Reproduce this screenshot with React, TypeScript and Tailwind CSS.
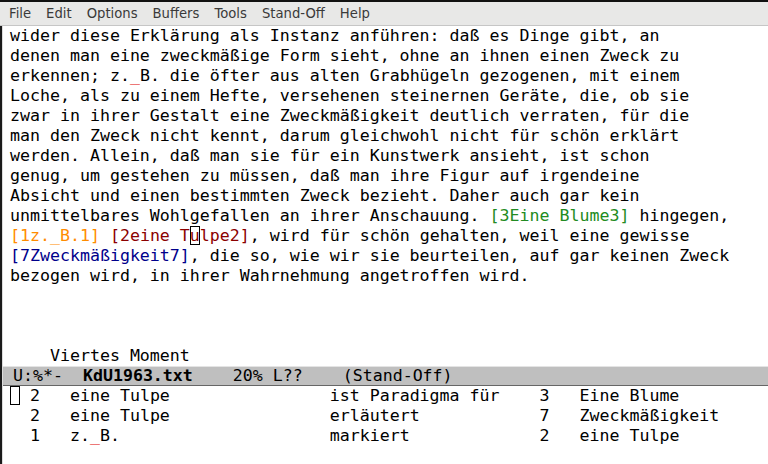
import React from "react";

const mono = "font-['DejaVu_Sans_Mono','Liberation_Mono',monospace] text-[16.6px] leading-[20px]";

const menus = ["File", "Edit", "Options", "Buffers", "Tools", "Stand-Off", "Help"];

function Line({ children }: { children?: React.ReactNode }) {
  return <div className="h-[20px] whitespace-pre">{children ?? " "}</div>;
}

function Cursor({ children }: { children: React.ReactNode }) {
  return <span className="shadow-[inset_0_0_0_1px_#000]">{children}</span>;
}

const Us = () => <span className="text-[#e00000]">_</span>;

const rows = [
  { n: "2", a: "eine Tulpe", v: "ist Paradigma für", m: "3", b: "Eine Blume" },
  { n: "2", a: "eine Tulpe", v: "erläutert", m: "7", b: "Zweckmäßigkeit" },
  { n: "1", a: "z._B.", v: "markiert", m: "2", b: "eine Tulpe" },
];

function Row({ r, first }: { r: (typeof rows)[number]; first: boolean }) {
  const head = r.a.padEnd(26, " ");
  const verb = r.v.padEnd(21, " ");
  const renderA = r.a === "z._B." ? (
    <>
      z.<Us />B.{" ".repeat(21)}
    </>
  ) : (
    head
  );
  return (
    <Line>
      {first ? <Cursor> </Cursor> : " "}
      {" " + r.n + "   "}
      {renderA}
      {verb}
      {r.m + "   " + r.b}
    </Line>
  );
}

export default function App() {
  return (
    <div className="w-[768px] h-[464px] bg-white overflow-hidden flex flex-col text-black">
      <div className="h-[2px] bg-[#111]" />
      <div className="h-[24px] bg-[#e8e8e7] border-b border-[#c6c6c6] flex items-center pl-[9px] gap-[15px] font-['DejaVu_Sans',sans-serif] text-[13.2px] text-[#3a3a3a]">
        {menus.map((m) => (
          <span key={m}>{m}</span>
        ))}
      </div>
      <div className="flex-1 flex border-l-2 border-[#1a1a1a]">
        <div className="w-[1px] bg-[#dcdcdc]" />
        <div className={`flex-1 flex flex-col ${mono}`}>
          <div className="pl-[7px]">
            <Line>wider diese Erklärung als Instanz anführen: daß es Dinge gibt, an</Line>
            <Line>denen man eine zweckmäßige Form sieht, ohne an ihnen einen Zweck zu</Line>
            <Line>
              erkennen; z.<Us />B. die öfter aus alten Grabhügeln gezogenen, mit einem
            </Line>
            <Line>Loche, als zu einem Hefte, versehenen steinernen Geräte, die, ob sie</Line>
            <Line>zwar in ihrer Gestalt eine Zweckmäßigkeit deutlich verraten, für die</Line>
            <Line>man den Zweck nicht kennt, darum gleichwohl nicht für schön erklärt</Line>
            <Line>werden. Allein, daß man sie für ein Kunstwerk ansieht, ist schon</Line>
            <Line>genug, um gestehen zu müssen, daß man ihre Figur auf irgendeine</Line>
            <Line>Absicht und einen bestimmten Zweck bezieht. Daher auch gar kein</Line>
            <Line>
              unmittelbares Wohlgefallen an ihrer Anschauung.{" "}
              <span className="text-[#228b22]">[3Eine Blume3]</span> hingegen,
            </Line>
            <Line>
              <span className="text-[#ff8c00]">[1z._B.1]</span>{" "}
              <span className="text-[#8b0000]">
                [2eine T<Cursor>u</Cursor>lpe2]
              </span>
              , wird für schön gehalten, weil eine gewisse
            </Line>
            <Line>
              <span className="text-[#00008b]">[7Zweckmäßigkeit7]</span>, die so, wie wir sie beurteilen, auf gar keinen Zweck
            </Line>
            <Line>bezogen wird, in ihrer Wahrnehmung angetroffen wird.</Line>
            <Line />
            <Line />
            <Line />
            <Line>{"    Viertes Moment"}</Line>
          </div>
          <div className="h-[20px] bg-[#bfbfbf] border-t border-[#e4e4e4] border-b border-b-[#666] pl-[10px] whitespace-pre leading-[18px]">
            {"U:%*-  "}
            <span className="font-bold">KdU1963.txt</span>
            {"    20% L??    (Stand-Off)"}
          </div>
          <div className="pl-[7px]">
            {rows.map((r, i) => (
              <Row key={i} r={r} first={i === 0} />
            ))}
          </div>
        </div>
      </div>
    </div>
  );
}
